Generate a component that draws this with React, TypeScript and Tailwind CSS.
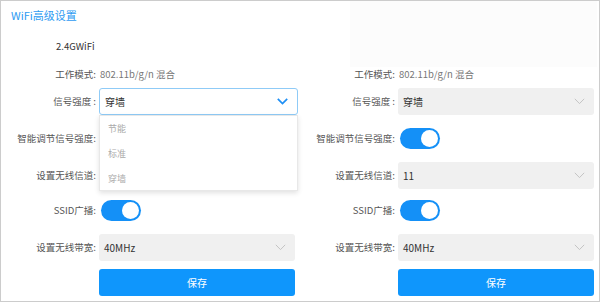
import React from 'react';

function Chevron({ active }: { active?: boolean }) {
  return (
    <svg width="11" height="7" viewBox="0 0 11 7" className="shrink-0">
      <path
        d="M0.8 0.8 L5.5 5.6 L10.2 0.8"
        fill="none"
        stroke={active ? '#1e8ff5' : '#c4c4c4'}
        strokeWidth={active ? 1.7 : 1}
      />
    </svg>
  );
}

function Toggle() {
  return (
    <div className="w-[40px] h-[21px] rounded-full bg-[#1490f7] flex items-center justify-end pr-[2px] ml-[2px]">
      <div className="w-[17px] h-[17px] rounded-full bg-white" />
    </div>
  );
}

function GraySelect({ value }: { value: string }) {
  return (
    <div className="w-[196px] h-[27px] rounded-[3px] bg-[#f0f0f0] flex items-center justify-between pl-[5px] pr-[9px] text-[10px] text-[#333]">
      <span>{value}</span>
      <Chevron />
    </div>
  );
}

function Row({ label, children, className = '' }: { label: string; children: React.ReactNode; className?: string }) {
  return (
    <div className={`flex items-center h-[27px] ${className}`}>
      <div className="w-[95px] shrink-0 text-right text-[9.5px] text-[#555] whitespace-nowrap">{label}</div>
      <div className="ml-[3px] relative flex items-center">{children}</div>
    </div>
  );
}

function SaveButton() {
  return (
    <div className="w-[196px] h-[27px] rounded-[3px] bg-[#0f96fc] flex items-center justify-center text-white text-[10px]">
      保存
    </div>
  );
}

function Column({ left }: { left?: boolean }) {
  return (
    <div className="w-[299px] flex flex-col">
      {left ? (
        <>
          <div className="h-[28px] flex items-center pl-[10px] text-[11px] text-[#2e9bf2]">WiFi高级设置</div>
          <div className="h-[32px] flex items-center pt-[4px] pl-[55px] text-[9.5px] text-[#333]">2.4GWiFi</div>
        </>
      ) : (
        <div className="h-[66px] -mb-[6px] ml-[50px] mr-[2px] bg-[#fcfcfc]" />
      )}
      <Row label="工作模式:">
        <span className="ml-[1px] text-[9.5px] text-[#777]">802.11b/g/n 混合</span>
      </Row>
      <Row label="信号强度 :" className="relative z-10">
        {left ? (
          <>
            <div className="w-[199px] h-[27px] rounded-[3px] border border-[#8fcbf7] bg-white flex items-center justify-between pl-[5px] pr-[9px] text-[10px] text-[#333]">
              <span>穿墙</span>
              <Chevron active />
            </div>
            {/* open dropdown list */}
            <div className="absolute left-0 top-[27px] w-[199px] bg-white border border-[#e8e8e8] shadow-[0_2px_5px_rgba(0,0,0,0.12)] text-[9px] text-[#aaa]">
              <div className="h-[25px] flex items-center pl-[8px]">节能</div>
              <div className="h-[25px] flex items-center pl-[8px]">标准</div>
              <div className="h-[24px] flex items-center pl-[8px]">穿墙</div>
            </div>
          </>
        ) : (
          <GraySelect value="穿墙" />
        )}
      </Row>
      <Row label="智能调节信号强度:" className="mt-[10px]">
        <div className={left ? 'invisible' : ''}>
          <Toggle />
        </div>
      </Row>
      <Row label="设置无线信道:" className="mt-[10px]">
        <div className={left ? 'invisible' : ''}>
          <GraySelect value="11" />
        </div>
      </Row>
      <Row label="SSID广播:" className="mt-[8px]">
        <Toggle />
      </Row>
      <Row label="设置无线带宽:" className="mt-[10px]">
        <GraySelect value="40MHz" />
      </Row>
      <Row label="" className="mt-[8px]">
        <SaveButton />
      </Row>
    </div>
  );
}

export default function App() {
  return (
    <div className="w-[600px] h-[302px] border border-[#cccccc] bg-white flex font-['Noto_Sans_CJK_SC',sans-serif] leading-none">
      <Column left />
      <Column />
    </div>
  );
}
